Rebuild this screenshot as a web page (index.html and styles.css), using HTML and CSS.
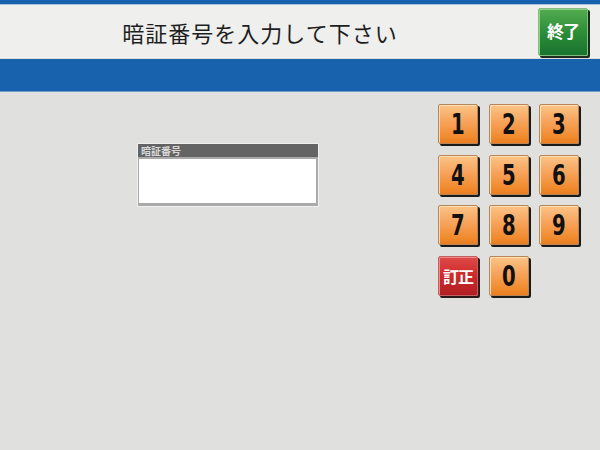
FILE: index.html
```html
<!DOCTYPE html>
<html lang="ja">
<head>
  <meta charset="UTF-8">
  <title>暗証番号入力</title>
  <link rel="stylesheet" href="styles.css">
</head>
<body>
  <div class="topline"></div>
  <div class="header">
    <div class="title">暗証番号を入力して下さい</div>
    <button class="btn-end">終了</button>
  </div>
  <div class="bluebar"></div>
  <div class="main">
    <div class="pin-panel">
      <div class="pin-label">暗証番号</div>
      <div class="pin-field"></div>
    </div>
    <div class="keypad">
      <button class="key"><span class="num">1</span></button>
      <button class="key"><span class="num">2</span></button>
      <button class="key"><span class="num">3</span></button>
      <button class="key"><span class="num">4</span></button>
      <button class="key"><span class="num">5</span></button>
      <button class="key"><span class="num">6</span></button>
      <button class="key"><span class="num">7</span></button>
      <button class="key"><span class="num">8</span></button>
      <button class="key"><span class="num">9</span></button>
      <button class="key key-fix">訂正</button>
      <button class="key"><span class="num">0</span></button>
    </div>
  </div>
</body>
</html>
```

FILE: styles.css
```css
body {
  margin: 0;
  width: 600px;
  height: 450px;
  overflow: hidden;
  background: #e0e0df;
  font-family: "Noto Sans CJK JP", "Noto Sans", sans-serif;
}

.topline {
  height: 4px;
  background: #1761ad;
  border-bottom: 1px solid #a9c3de;
}

.header {
  display: flex;
  align-items: center;
  height: 53px;
  padding-right: 12px;
  background: #efefee;
  border-bottom: 1px solid #dcdcdc;
}

.title {
  flex: 1;
  padding-right: 18px;
  text-align: center;
  font-size: 22px;
  color: #1e1e1e;
  letter-spacing: 1px;
}

.btn-end {
  width: 50px;
  height: 48px;
  padding: 0 0 2px 0;
  border: 1px solid #7fbf7f;
  border-radius: 2px;
  background: linear-gradient(to bottom, #53ad4f, #2a8a36 55%, #1a7430);
  box-shadow: 2px 2px 0 #1d2a1d, inset 1px 1px 0 #8fd08a;
  color: #fff;
  font-family: "Noto Sans CJK JP", sans-serif;
  font-size: 17px;
  font-weight: bold;
  letter-spacing: -1px;
}

.bluebar {
  height: 32px;
  background: #1761ad;
  border-bottom: 1px solid #6f9ccc;
}

.main {
  display: flex;
  align-items: flex-start;
}

.pin-panel {
  margin: 51px 0 0 137px;
  width: 180px;
  border: 1px solid #f0f0f0;
  background: #aaa;
}

.pin-label {
  height: 13px;
  padding-left: 3px;
  background: #646464;
  color: #d8d8d8;
  font-size: 10px;
  font-weight: bold;
  line-height: 13px;
}

.pin-field {
  height: 44px;
  margin: 2px 2px 3px 1px;
  background: #fff;
}

.keypad {
  display: grid;
  grid-template-columns: repeat(3, 40px);
  grid-auto-rows: 40px;
  column-gap: 10.5px;
  row-gap: 10.7px;
  margin: 12px 21px 0 auto;
}

.key {
  padding: 2px 0 0 0;
  border: 1px solid #b98556;
  border-radius: 2px;
  background: linear-gradient(to bottom, #fbc487, #f7a25a 45%, #f08a2c 85%, #e97d22);
  box-shadow: 2px 2px 0 #1a1a1a, inset 1px 1px 0 #fde0b8;
  color: #111;
  font-family: "DejaVu Sans Condensed", "DejaVu Sans", sans-serif;
  font-size: 28px;
  font-weight: bold;
  line-height: 1;
}

.num {
  display: inline-block;
  transform: scaleX(0.78);
}

.key-fix {
  padding: 0;
  border-color: #c46060;
  background: linear-gradient(to bottom, #df4a48, #cc2a2a 50%, #b11f24);
  box-shadow: 2px 2px 0 #2a1a1a, inset 1px 1px 0 #ee8a8a;
  color: #fff;
  font-family: "Noto Sans CJK JP", sans-serif;
  font-size: 16px;
  letter-spacing: -1px;
}
```
